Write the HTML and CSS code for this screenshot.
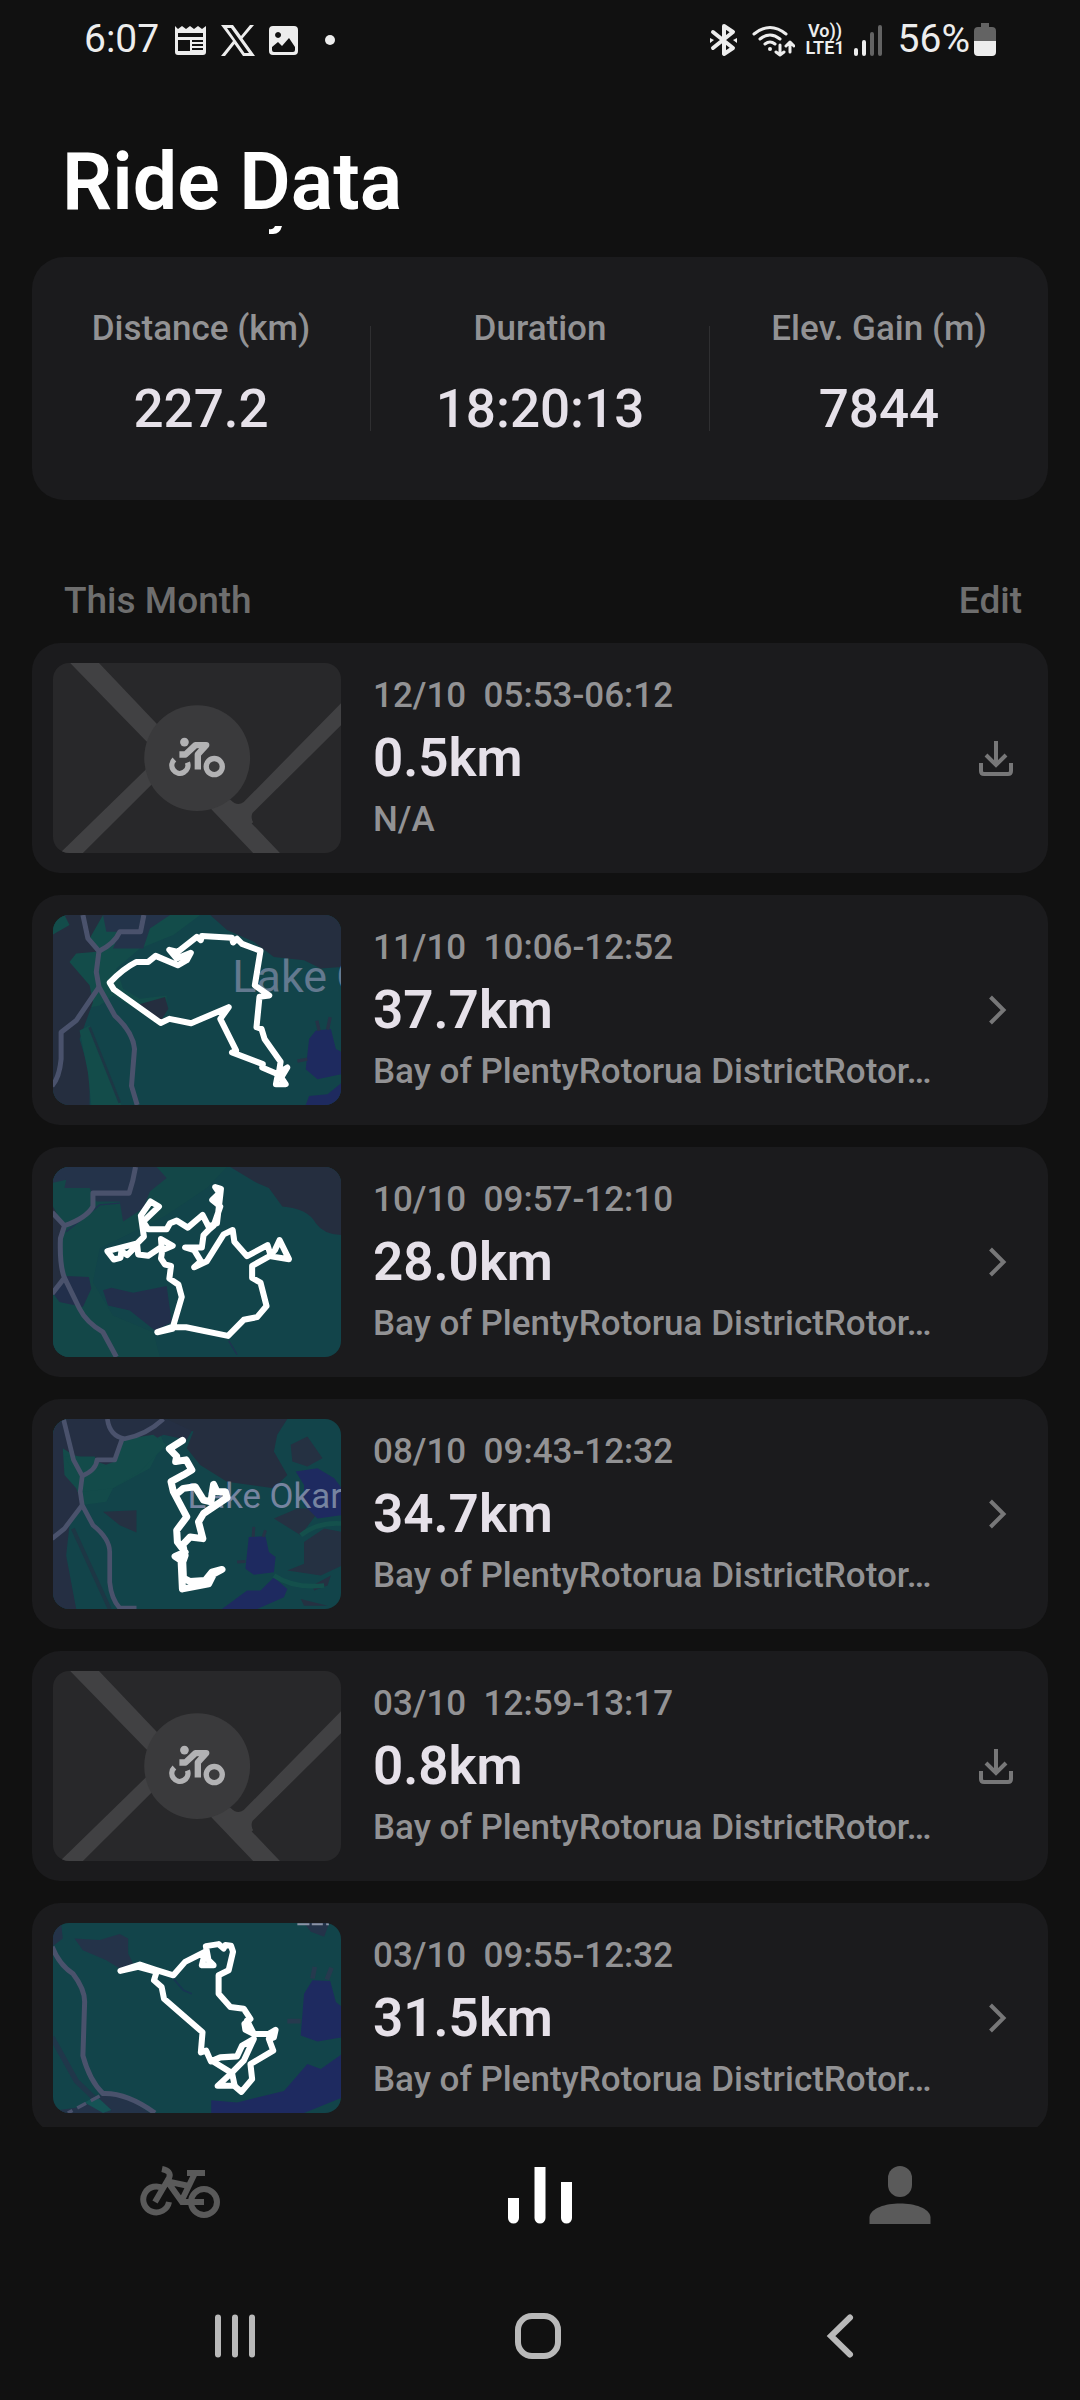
FILE: index.html
```html
<!DOCTYPE html>
<html lang="en">
<head>
  <meta charset="UTF-8">
  <meta name="viewport" content="width=device-width, initial-scale=1.0">
  <title>Ride Data</title>
  <link rel="stylesheet" href="styles.css">
</head>
<body>
  <!-- shared icons -->
  <svg class="sprite" aria-hidden="true">
    <symbol id="icon-download" viewBox="0 0 48 48">
      <path d="M24 7v23M14 21l10 10 10-10M9 29v8q0 3 3 3h24q3 0 3-3v-8" fill="none" stroke="#777778" stroke-width="4" stroke-linecap="butt"/>
    </symbol>
    <symbol id="icon-chevron" viewBox="0 0 48 48">
      <path d="M18.500 11L31.500 24 18.500 37" fill="none" stroke="#777778" stroke-width="4"/>
    </symbol>
    <symbol id="no-map" viewBox="38 39 865 567" preserveAspectRatio="xMidYMid slice">
      <rect x="38" y="39" width="865" height="567" fill="#28282a"/>
      <path d="M92 39H178L500 378 718 606H638L320 273zM62 606L340 335 372 365 130 606zM903 156V222L636 487Q630 500 638 514L606 540 520 440 570 447Q590 468 610 454z" fill="#414143"/>
      <circle cx="471" cy="323" r="158" fill="#3a3a3c"/>
      <g fill="none" stroke="#b2b2b4">
        <circle cx="522" cy="348" r="24" stroke-width="16"/>
        <path d="M403 327A24 24 0 1 0 442 336" stroke-width="16"/>
        <path d="M418 312H436L466 284H498L473 312V357" stroke-width="19" stroke-linejoin="round"/>
      </g>
      <circle cx="433" cy="275" r="13" fill="#b2b2b4"/>
    </symbol>
  </svg>

  <div class="status-bar">
    <span class="time">6:07</span>
    <svg class="notif-icons" viewBox="0 0 164 36">
      <g fill="#ededed">
        <path fill-rule="evenodd" d="M1 5l3 3 4-3 4 3 4-3 4 3 4-3 4 3 4-3v26q0 3-3 3H4q-3 0-3-3zM4 12v4h25v-4zM4 19v11h12V19zM18 19v2h11v-2zM18 23v2h11v-2zM18 27v2h11v-2z"/>
        <path fill-rule="evenodd" d="M47 4h12l8 11L76 4h4L68.500 17.500 81 35H69l-8.500-12L51 35h-4l12-15zM53 7l17.500 25H75L57 7z"/>
        <path fill-rule="evenodd" d="M99 5h21q4 0 4 4v21q0 4-4 4H99q-4 0-4-4V9q0-4 4-4zM98 26v3q0 2 2 2h19q2 0 2-2v-3l-6-9-7 8-4-4zM104 11a3 3 0 1 0 .1 0z"/>
        <circle cx="156" cy="19" r="5"/>
      </g>
    </svg>
    <svg class="signal-icons" viewBox="0 0 86 36">
      <g fill="none" stroke="#ededed" stroke-width="4" stroke-linejoin="round" stroke-linecap="round">
        <path d="M4 11L24 27 15 33V5L24 11 4 27"/>
        <path d="M45 13Q61 0 77 13M51 18Q61 10 71 18M56 23Q61 19 66 23" stroke-width="3"/>
        <path d="M71 24v10M67 31l4 3 4-3M81 31V22M77 25l4-4 4 4" stroke-width="3"/>
      </g>
      <path d="M1 17l4 2-4 3zM28 17l-4 2 4 3z" fill="#ededed"/>
      <circle cx="61" cy="28" r="2" fill="#ededed"/>
    </svg>
    <span class="volte"><span>Vo))</span><span>LTE1</span></span>
    <svg class="bars" viewBox="0 0 29 36">
      <g stroke-width="4" stroke-linecap="round">
        <path d="M3 29v4M11 21v12" stroke="#ededed"/>
        <path d="M19 13v20M27 6v27" stroke="#636363"/>
      </g>
    </svg>
    <span class="battery-level">56%</span>
    <svg class="battery" viewBox="0 0 22 36">
      <path d="M7 2h8v4h3q4 0 4 4v10H0V10q0-4 4-4h3z" fill="#636363"/>
      <path d="M0 20h22v11q0 4-4 4H4q-4 0-4-4z" fill="#ededed"/>
    </svg>
  </div>

  <main>
    <header>
      <h1>Ride Data</h1>
      <svg class="title-tail" viewBox="0 0 13 8"><path d="M6 0H13Q11 8 4 8H0V3Q4 4 6 0z" fill="#fff"/></svg>
    </header>

    <section class="summary">
      <div class="stat">
        <p class="stat-label">Distance (km)</p>
        <p class="stat-value">227.2</p>
      </div>
      <span class="divider"></span>
      <div class="stat">
        <p class="stat-label">Duration</p>
        <p class="stat-value">18:20:13</p>
      </div>
      <span class="divider"></span>
      <div class="stat">
        <p class="stat-label">Elev. Gain (m)</p>
        <p class="stat-value">7844</p>
      </div>
    </section>

    <div class="section-head">
      <h2>This Month</h2>
      <button class="edit">Edit</button>
    </div>

    <ul class="rides">
      <li class="ride">
        <svg class="thumb"><use href="#no-map"/></svg>
        <div class="info">
          <p class="date">12/10&nbsp; 05:53-06:12</p>
          <p class="distance">0.5km</p>
          <p class="place">N/A</p>
        </div>
        <button class="action" aria-label="Download ride"><svg><use href="#icon-download"/></svg></button>
      </li>

      <li class="ride">
        <svg class="thumb" viewBox="38 30 865 567" preserveAspectRatio="xMidYMid slice">
          <rect x="38" y="30" width="865" height="567" fill="#12444a"/>
          <path d="M38 30H480L400 90 300 130 230 190 250 250 300 280 380 270 380 320 350 350 220 270 180 300 38 330z" fill="#134c4a"/>
          <path d="M38 90L90 60 75 30H190L150 100 170 140 110 145 90 170 150 240 160 290 120 400 150 500 150 597H38z" fill="#252e3f"/>
          <path d="M190 30H390L330 70 310 130 220 130 240 80 200 80z" fill="#24334a"/>
          <path d="M510 30H903V185L840 190 790 165 700 155 640 110 560 75z" fill="#252e3f"/>
          <path d="M285 300L375 275 385 310 360 350z" fill="#252e3f"/>
          <path d="M120 375L150 360 170 420 245 597H155L145 500z" fill="#134c4a"/>
          <path d="M150 365L240 590" stroke="#1d3745" stroke-width="8"/>
          <path d="M825 375L870 370 885 430 903 440V505L830 520 795 490 805 400zM903 530V597H795L805 570 860 565z" fill="#1e2a5f"/>
          <path d="M828 345L835 375M868 335L860 372M770 466L800 460" stroke="#263347" stroke-width="10"/>
          <g fill="none" stroke="#4a526c" stroke-width="15" stroke-linejoin="round">
            <path d="M130 30L145 100 178 138 170 200 178 245 225 330Q280 380 284 430L275 540 292 597"/>
            <path d="M312 30L302 80H240Q225 115 178 138M178 245L110 345 65 380V460Q60 515 38 540"/>
          </g>
          <text y="260" class="map-label map-label-lg"><tspan x="576">Lake</tspan><tspan x="886">O</tspan></text>
          <path class="route" d="M210 232Q250 190 290 170H325L347 152 413 180 440 165 452 143 410 160 388 134 413 140 470 95 482 105 485 93 575 98 578 112 590 101 605 116 660 137 643 240 686 270 657 274 648 365 663 370 672 400 720 468 715 500 740 485 722 515 735 535H706L712 505 665 485 667 475 575 440 587 434 540 340 565 305 453 353 388 340 362 352 222 252z"/>
        </svg>
        <div class="info">
          <p class="date">11/10&nbsp; 10:06-12:52</p>
          <p class="distance">37.7km</p>
          <p class="place">Bay of PlentyRotorua DistrictRotor…</p>
        </div>
        <button class="action" aria-label="Open ride"><svg><use href="#icon-chevron"/></svg></button>
      </li>

      <li class="ride">
        <svg class="thumb" viewBox="38 37 865 567" preserveAspectRatio="xMidYMid slice">
          <rect x="38" y="37" width="865" height="567" fill="#12444a"/>
          <path d="M38 37H560L500 100 380 180 180 280 160 380 220 480 340 530 360 604H38z" fill="#134748"/>
          <path d="M38 37H350L380 70 330 110 310 160 250 200 240 140 170 140 150 100 75 100 80 75 38 85z" fill="#24334a"/>
          <path d="M570 37H903V240Q850 240 825 205 800 160 725 155L685 100 650 85z" fill="#252e3f"/>
          <path d="M190 405L215 397 280 412 380 392 395 500 345 525 270 465 205 450zM38 410L80 362 148 365 155 400 130 455 60 440z" fill="#222f4b"/>
          <path d="M38 150L70 210 55 300 80 370 38 410z" fill="#252e3f"/>
          <path d="M80 230L180 150 240 145M565 555L590 597" stroke="#203251" stroke-width="4" fill="none"/>
          <g fill="none" stroke="#4a526c" stroke-width="15" stroke-linejoin="round">
            <path d="M287 37Q280 80 268 115H160V155Q140 190 75 212L38 172M75 212L63 250Q60 330 75 368L120 460Q140 500 190 530L230 604M75 368L38 415"/>
          </g>
          <path class="route" d="M352 530L395 515 438 515 563 541 610 493 650 485 678 452 660 382 635 368V332L687 303 745 312 717 255 703 285 690 300 681 270 620 303 582 260 577 225 550 238 500 318 462 336 482 318 462 285 435 277H485L490 240 505 225 520 212 540 155 516 135 537 115 525 97 542 102 540 120 530 205 505 215 487 180 443 218 410 197 390 205 380 223H325L310 200 357 155 332 140 303 182 312 245 292 265 203 288 222 313 242 308 245 288 262 300 292 270 295 298 325 302 365 275 363 252 398 272 367 285 363 310 375 328 393 332 388 370 415 388 425 425 397 520z"/>
        </svg>
        <div class="info">
          <p class="date">10/10&nbsp; 09:57-12:10</p>
          <p class="distance">28.0km</p>
          <p class="place">Bay of PlentyRotorua DistrictRotor…</p>
        </div>
        <button class="action" aria-label="Open ride"><svg><use href="#icon-chevron"/></svg></button>
      </li>

      <li class="ride">
        <svg class="thumb" viewBox="38 33 865 567" preserveAspectRatio="xMidYMid slice">
          <rect x="38" y="33" width="865" height="567" fill="#12444a"/>
          <path d="M38 33H340L370 100 330 180 220 240 200 280 130 290 70 240 38 210z" fill="#134b4a"/>
          <path d="M38 33H380L460 60 440 95 370 80 330 100 230 180 170 160 100 140 70 120 75 200 110 240 130 290 90 350 80 440 110 600H38z" fill="#252f43"/>
          <path d="M240 95L340 80 380 110 300 190 220 240 130 250 130 205 185 175 225 160z" fill="#134b4a"/>
          <path d="M75 145H165L185 175 130 205 90 170z" fill="#134b4a"/>
          <path d="M380 33H740L710 80 700 130 740 200 700 240 560 220 480 170 440 120 460 70z" fill="#252e3f"/>
          <path d="M190 310L290 305V372L240 350zM750 110L800 85 845 150 800 175 755 160zM740 485L790 465 790 400 850 360 903 370V470L840 500zM770 300H840L780 380 700 330zM780 570L860 590H790zM815 530L870 500 860 530 820 545z" fill="#253142"/>
          <path d="M765 190L830 180 880 210 903 240V320L830 330 790 290 790 230zM625 385L675 383 685 430 705 445 700 490 640 498 615 480zM545 600L620 545 660 545 700 505 740 540 730 565 650 600z" fill="#1e2a60"/>
          <path d="M640 355L638 385M675 365L668 385M590 460L615 458" stroke="#263347" stroke-width="9"/>
          <path d="M780 380Q830 340 903 345M700 500Q760 540 850 530" fill="none" stroke="#14504c" stroke-width="14"/>
          <path d="M100 360L210 600" stroke="#1d3745" stroke-width="12"/>
          <g fill="none" stroke="#4a526c" stroke-width="14" stroke-linejoin="round">
            <path d="M72 33L102 155 128 203 122 250 128 290 160 350Q210 390 210 430V520Q215 570 240 597H290"/>
            <path d="M203 33Q210 85 255 92 320 80 370 33M248 90L225 155H172Q170 185 128 203M128 290L75 360 38 390"/>
          </g>
          <text x="442" y="298" class="map-label">Lake Okar</text>
          <path class="route route-bold" d="M427 97L388 122 410 145 407 160 438 155 455 185 430 200 393 220 400 250 440 325 410 365 412 400 435 430 405 443 423 455 427 540 505 525 520 495 545 482 515 490 495 515 450 518 430 508 428 460 435 440 428 408 450 385 488 390 475 340 490 315 560 268 555 250 530 250 520 228 512 280 490 275 465 235 430 240 415 252"/>
        </svg>
        <div class="info">
          <p class="date">08/10&nbsp; 09:43-12:32</p>
          <p class="distance">34.7km</p>
          <p class="place">Bay of PlentyRotorua DistrictRotor…</p>
        </div>
        <button class="action" aria-label="Open ride"><svg><use href="#icon-chevron"/></svg></button>
      </li>

      <li class="ride">
        <svg class="thumb"><use href="#no-map"/></svg>
        <div class="info">
          <p class="date">03/10&nbsp; 12:59-13:17</p>
          <p class="distance">0.8km</p>
          <p class="place">Bay of PlentyRotorua DistrictRotor…</p>
        </div>
        <button class="action" aria-label="Download ride"><svg><use href="#icon-download"/></svg></button>
      </li>

      <li class="ride">
        <svg class="thumb" viewBox="38 39 865 567" preserveAspectRatio="xMidYMid slice">
          <rect x="38" y="39" width="865" height="567" fill="#12444a"/>
          <path d="M38 39H65L70 85 38 110zM105 85L180 90 240 72 265 85 265 130 280 160 240 175 200 150 130 120zM38 600L110 590 190 550 260 560 330 606H38zM790 39H865L850 80 810 65z" fill="#243349"/>
          <path d="M38 380L110 510 210 606" stroke="#20374a" stroke-width="16" fill="none"/>
          <path d="M135 575L170 555 215 597 190 606z" fill="#155355"/>
          <path d="M400 205L430 240 455 250" stroke="#183653" stroke-width="5" fill="none"/>
          <path d="M815 210L868 212 885 275 903 290V380L830 393 780 375 790 250zM513 568L590 575 730 540 800 460 840 475 903 430V560L790 606H513z" fill="#1e2a60"/>
          <path d="M822 170L815 205M872 172L858 208M740 332H780" stroke="#263a4e" stroke-width="14"/>
          <g fill="none" stroke="#4a526c" stroke-width="15" stroke-linejoin="round">
            <path d="M38 110Q60 165 100 190 138 240 135 280L130 435Q150 510 190 548 260 545 345 606"/>
            <path d="M180 555L85 606" stroke-dasharray="30 16" stroke-width="10"/>
          </g>
          <path d="M770 43H806M813 43H846M856 43H864" stroke="#8b93a5" stroke-width="6"/>
          <path class="route" d="M242 182L300 163 345 178 400 195 435 155 495 125 485 165H520L505 150 497 108 535 102 550 115 555 105 572 107 578 125 565 180 535 195V250L570 290 610 295 630 325 612 340 615 358 640 370 685 370 705 358 700 380 685 385 698 420 630 460 635 505 603 543 582 525H532L570 490 610 450 640 385 605 405 590 437 540 440 512 452 498 420 482 425 487 365 372 265 365 230 342 210 350 185 295 170z"/>
          <path class="route" d="M515 450L575 487 583 525M685 370L690 385M620 330L640 370"/>
        </svg>
        <div class="info">
          <p class="date">03/10&nbsp; 09:55-12:32</p>
          <p class="distance">31.5km</p>
          <p class="place">Bay of PlentyRotorua DistrictRotor…</p>
        </div>
        <button class="action" aria-label="Open ride"><svg><use href="#icon-chevron"/></svg></button>
      </li>
    </ul>
  </main>

  <nav class="tabs">
    <a href="#ride" aria-label="Ride">
      <svg viewBox="0 0 80 60">
        <g fill="none" stroke="#5a5a5a" stroke-width="6">
          <path d="M24 23A13 13 0 1 0 29 36"/>
          <circle cx="64" cy="36" r="13"/>
          <path d="M15 36L29 12Q32 5 22 3M27 15L42 36H64M30 16L49 20M42 34L55 7M47 7H65"/>
        </g>
      </svg>
    </a>
    <a href="#data" aria-label="Data" class="active">
      <svg viewBox="0 0 80 60">
        <path d="M8 32H19V52a5.500 5.500 0 0 1-11 0zM34.500 1H45.500V52a5.500 5.500 0 0 1-11 0zM61 16H72V52a5.500 5.500 0 0 1-11 0z" fill="#fff"/>
      </svg>
    </a>
    <a href="#profile" aria-label="Profile">
      <svg viewBox="0 0 80 60">
        <rect x="28" y="0" width="24" height="31" rx="12" fill="#5a5a5a"/>
        <path d="M9.500 58V51C12 33 68 33 70.500 51V58z" fill="#5a5a5a"/>
      </svg>
    </a>
  </nav>

  <div class="system-nav">
    <button aria-label="Recent apps">
      <svg viewBox="0 0 48 48"><path d="M7 5.500V42.500M24 5.500V42.500M41 5.500V42.500" stroke="#b9b9b9" stroke-width="6" stroke-linecap="round"/></svg>
    </button>
    <button aria-label="Home">
      <svg viewBox="0 0 48 48"><rect x="4" y="4" width="40" height="40" rx="14" fill="none" stroke="#b9b9b9" stroke-width="6"/></svg>
    </button>
    <button aria-label="Back">
      <svg viewBox="0 0 48 48"><path d="M33 5.500L14 24 33 42.500" fill="none" stroke="#b9b9b9" stroke-width="6" stroke-linecap="round"/></svg>
    </button>
  </div>
</body>
</html>
```
FILE: styles.css
```css
* {
  box-sizing: border-box;
}
body {
  display: flex;
  flex-direction: column;
  height: 100vh;
  margin: 0;
  background: #111111;
  color: #e6e1e9;
  font-family: Roboto, sans-serif;
  font-weight: 500;
}
h1, h2, p, ul {
  margin: 0;
  padding: 0;
}
svg {
  display: block;
}
button {
  padding: 0;
  border: none;
  background: none;
  color: inherit;
  font: inherit;
  cursor: pointer;
}
.sprite {
  display: none;
}

/* status bar */
.status-bar {
  display: flex;
  flex: none;
  align-items: center;
  height: 78px;
  padding: 0 84px;
  color: #ededed;
  font-size: 39px;
  font-weight: 400;
}
.notif-icons {
  width: 164px;
  height: 36px;
  margin-left: 15px;
}
.signal-icons {
  width: 86px;
  height: 36px;
  margin-left: auto;
}
.volte {
  display: flex;
  flex-direction: column;
  align-items: center;
  margin-left: 10px;
  font-size: 18px;
  font-weight: 600;
  line-height: 17px;
}
.bars {
  width: 29px;
  height: 36px;
  margin: 0 16px 0 8px;
}
.battery {
  width: 22px;
  height: 36px;
  margin-left: 4px;
}

main {
  flex: 1;
  min-height: 0;
  padding: 60px 32px 0;
  overflow: hidden;
}
header {
  padding: 0 32px 0 30px;
}
h1 {
  color: #fff;
  font-size: 79px;
  font-weight: 600;
  line-height: 88px;
}
.title-tail {
  width: 13px;
  height: 8px;
  margin-left: 207px;
}

/* totals */
.summary {
  display: flex;
  margin-top: 23px;
  padding: 52px 0 61px;
  border-radius: 32px;
  background: #1b1b1d;
}
.stat {
  flex: 1;
  text-align: center;
}
.stat-label {
  margin-bottom: 30px;
  color: #929294;
  font-size: 35px;
  line-height: 40px;
}
.stat-value {
  font-size: 53px;
  line-height: 60px;
}
.divider {
  width: 1px;
  height: 105px;
  margin-top: 17px;
  background: #2f2f31;
}

.section-head {
  display: flex;
  justify-content: space-between;
  margin-top: 80px;
  padding: 0 26px 0 32px;
  color: #6e6e6e;
  font-size: 37px;
  line-height: 42px;
}
h2 {
  font-size: 37px;
  font-weight: 500;
}

/* ride list */
.rides {
  margin-top: 21px;
  list-style: none;
}
.ride {
  display: flex;
  align-items: center;
  margin-bottom: 22px;
  padding: 20px 28px 20px 21px;
  border-radius: 28px;
  background: #1b1b1d;
}
.thumb {
  flex: none;
  width: 288px;
  height: 190px;
  border-radius: 16px;
}
.info {
  flex: 1;
  min-width: 0;
  margin-left: 32px;
}
.date, .place {
  overflow: hidden;
  color: #929294;
  font-size: 35px;
  line-height: 40px;
  text-overflow: ellipsis;
  white-space: nowrap;
}
.distance {
  margin: 12px 0;
  font-size: 53px;
  font-weight: 600;
  line-height: 60px;
}
.action svg {
  width: 48px;
  height: 48px;
}
.route {
  fill: none;
  stroke: #fff;
  stroke-width: 18;
  stroke-linejoin: round;
  stroke-linecap: round;
}
.route-bold {
  stroke-width: 21;
}
.map-label {
  fill: #7684a0;
  font-size: 104px;
  font-weight: 400;
}
.map-label-lg {
  fill: #63798f;
  font-size: 134px;
}

/* app tabs */
.tabs {
  display: flex;
  flex: none;
  height: 137px;
  padding-top: 39px;
  background: #111111;
}
.tabs a {
  flex: 1;
}
.tabs svg {
  width: 80px;
  height: 60px;
  margin: 0 auto;
}

.system-nav {
  display: flex;
  flex: none;
  height: 136px;
  padding: 8px 88px 0 84px;
}
.system-nav button {
  flex: 1;
}
.system-nav svg {
  width: 48px;
  height: 48px;
  margin: 0 auto;
}
```
